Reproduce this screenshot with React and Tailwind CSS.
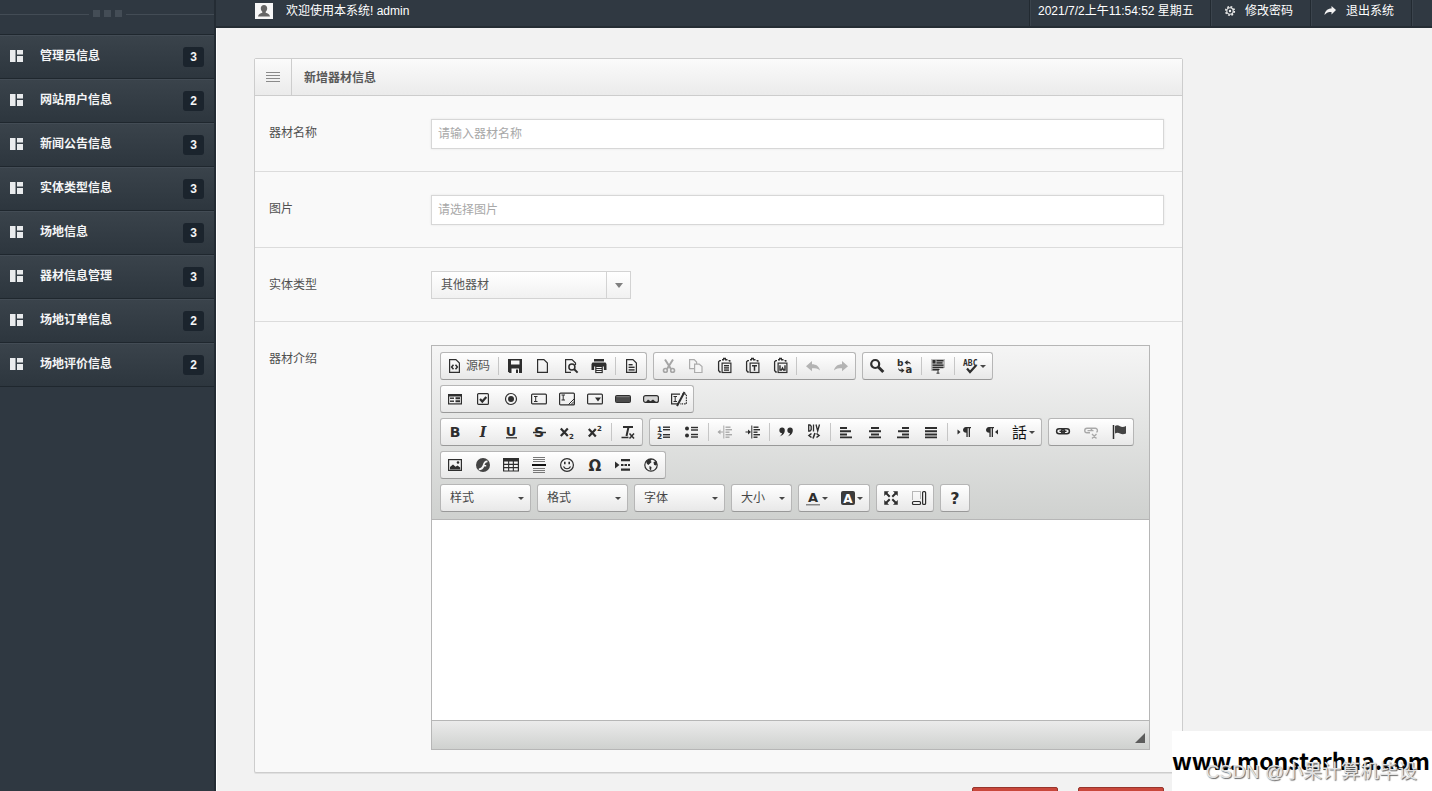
import React from "react";

const MENU = [
  ["管理员信息", 3],
  ["网站用户信息", 2],
  ["新闻公告信息", 3],
  ["实体类型信息", 3],
  ["场地信息", 3],
  ["器材信息管理", 3],
  ["场地订单信息", 2],
  ["场地评价信息", 2],
];

const INK = "#2e2e2e";
const S = { fill: "none", stroke: INK, strokeWidth: 1.2 };

const page = <path d="M2.6 1.6h6.3l3.5 3.5v9.3H2.6z" {...S} />;

const clipboard = (
  <g>
    <path d="M5 2.6H3.8l-1.2 1.200v8.700l1.200 1.500h1M12.500 2.600h1.300v1.200" {...S} strokeWidth="1.3" />
    <path d="M6 1.700h2M9 1.700h2.500M7 .6h3" stroke={INK} strokeWidth="1.6" />
    <rect x="6.1" y="5.1" width="8.8" height="9.4" {...S} />
  </g>
);

const lines = (rows, color = INK) =>
  rows.map(([x, y, w], i) => <rect key={i} x={x} y={y} width={w} height="1.4" fill={color} />);

const letter = (ch, extra = {}) => (
  <text x="8" y="13" textAnchor="middle" fontFamily="DejaVu Sans" fontWeight="bold" fontSize="13" fill={INK} {...extra}>
    {ch}
  </text>
);

const ICONS = {
  source: (
    <g>
      {page}
      <path d="M6.5 6.8 4.6 9l1.9 2.2M8.5 6.8 10.4 9l-1.9 2.2" {...S} strokeWidth="1.5" />
    </g>
  ),
  save: (
    <g>
      <path d="M1 1h14v14H2.5L1 13.5z" fill={INK} />
      <path d="M4 2.5h8.5v4H4z" fill="#f8f8f8" />
      <path d="M4.5 10.5h7.5V15H4.5z" fill="#f8f8f8" />
      <path d="M9 11.5h2V15H9z" fill={INK} />
    </g>
  ),
  page,
  preview: (
    <g>
      <path d="M12.5 7V5L9 1.6H2.6v12.8H8" {...S} />
      <circle cx="8.9" cy="8.9" r="3" {...S} strokeWidth="1.5" />
      <path d="m11 11 3.6 3.6" stroke={INK} strokeWidth="2" />
    </g>
  ),
  print: (
    <g fill={INK}>
      <path d="M3 1h10v2.5H3zM1.5 4.5h13L15.5 6v6h-2.6V8.4H3.1V12H.5V6z" />
      <path d="M4.2 7.5h7.6v7.6H4.2z" />
      <path d="M5.4 9h5.2v1.1H5.4zM5.4 11h5.2v1H5.4zM5.4 13h5.2v1H5.4z" fill="#f5f5f5" />
    </g>
  ),
  template: (
    <g>
      {page}
      {lines([[4.6, 6, 4], [4.6, 8.6, 6], [4.6, 11.2, 6]])}
    </g>
  ),
  cut: (
    <g stroke="#a5a5a5" fill="none" strokeWidth="2">
      <path d="M5 1.5 11 11M13 1.5 7 11" />
      <circle cx="5.4" cy="12.4" r="1.9" strokeWidth="1.6" />
      <circle cx="12.6" cy="12.4" r="1.9" strokeWidth="1.6" />
    </g>
  ),
  copy: (
    <g fill="#f5f5f5" stroke="#acacac" strokeWidth="1.2">
      <path d="M1.6 1.6h4.6l2.4 2.4v6.6H1.6z" />
      <path d="M6.6 6.1h4.6L14 8.6v5.9H6.6z" />
    </g>
  ),
  paste: (
    <g>
      {clipboard}
      {lines([[8, 7, 5], [8, 9.2, 5], [8, 11.400, 5]])}
    </g>
  ),
  pasteText: (
    <g>
      {clipboard}
      <path d="M8 7.700h5M10.500 7.700v5" stroke={INK} strokeWidth="1.5" />
    </g>
  ),
  pasteWord: (
    <g>
      {clipboard}
      <path d="M8 7.200v4.800h1.400l1.100-2 1.100 2H13V7.200" {...S} strokeWidth="1.4" />
    </g>
  ),
  undo: <path d="M1 8.2 7 3v3.2c4 0 7.2 2 8 6.3-2-2.2-4.500-2.300-8-2.300v3z" fill="#b3b3b3" />,
  redo: <path d="M15 8.200 9 3v3.200c-4 0-7.200 2-8 6.300 2-2.200 4.500-2.300 8-2.300v3z" fill="#b3b3b3" />,
  find: (
    <g fill="none" stroke={INK}>
      <circle cx="6.200" cy="6" r="4" strokeWidth="2.200" />
      <path d="m9.300 9 5 5" strokeWidth="3" />
    </g>
  ),
  replace: (
    <g fontFamily="DejaVu Sans" fontWeight="bold" fill={INK}>
      <text x="0" y="7.500" fontSize="9">b</text>
      <text x="8.500" y="15" fontSize="10">a</text>
      <path d="M7.500 4.500 10.500 2v1.500c2 0 3 1 3.500 3-1-1-2-1.200-3.500-1.200V7zM7.500 12.500 4.500 10v1.700c-2 0-3-.7-3.500-2 0 2.500 1.500 3.600 3.500 3.600V15z" />
    </g>
  ),
  selectAll: (
    <g>
      <path d="M1 1h14v9H1zM1 10h8v3H1z" fill="#bdbdbd" />
      {lines([[6.500, 2, 7], [6.500, 4.200, 6], [2.500, 6.500, 11], [2.500, 8.800, 11], [2.500, 11, 5]])}
      <path d="M2.500 2h3v3.500h-3z" fill={INK} />
      <path d="M6.500 11.500h3M8 11v4M6.500 15.200h3" stroke={INK} />
    </g>
  ),
  spell: (
    <g>
      <text x="0" y="8" fontSize="8" fontFamily="DejaVu Sans Mono" fontWeight="bold" fill={INK}>ABC</text>
      <path d="m4 10.500 3 3.500L13 7.500" {...S} strokeWidth="2.200" />
    </g>
  ),
  form: (
    <g>
      <path d="M1 3h14v10.500H1z" fill={INK} />
      <path d="M2.200 5.500h11.600v6.800H2.200z" fill="#f6f6f6" />
      {lines([[3, 6.500, 4], [3, 9.500, 4]])}
      <path d="M8.500 6.300h4.500v2H8.500zM8.500 9.300h4.500v2H8.500z" fill={INK} />
    </g>
  ),
  checkbox: (
    <g>
      <rect x="2.600" y="2.600" width="10.800" height="10.800" rx="1" {...S} />
      <path d="m5 8 2.300 2.500L11.300 6" {...S} strokeWidth="2.200" />
    </g>
  ),
  radio: (
    <g>
      <circle cx="8" cy="8" r="5.500" {...S} />
      <circle cx="8" cy="8" r="3" fill={INK} />
    </g>
  ),
  textfield: (
    <g>
      <rect x=".6" y="3.100" width="14.800" height="9.800" rx="1" {...S} />
      <path d="M3 5.500h3.500M3 10.500h3.500M4.700 5.500v5" stroke={INK} />
    </g>
  ),
  textarea: (
    <g>
      <rect x=".6" y="2.100" width="14.800" height="11.800" rx="1" {...S} />
      <path d="M2.500 4h3.500M2.500 9h3.500M4.200 4v5M15 8l-5.500 5.500M15 10.500l-3 3M15 12.500l-1 1" stroke={INK} />
    </g>
  ),
  selectbox: (
    <g>
      <rect x=".6" y="3.100" width="14.800" height="9.800" rx="1" {...S} />
      <path d="M8 6.500h6l-3 4z" fill={INK} />
    </g>
  ),
  button: (
    <g>
      <rect x=".5" y="4.500" width="15" height="7" rx="1" fill="#4b4b4b" stroke={INK} />
      <path d="M1.500 5.700h13" stroke="#818181" />
    </g>
  ),
  imageButton: (
    <g>
      <rect x=".6" y="4.600" width="14.800" height="6.800" rx="2" fill="#d5d5d5" stroke={INK} strokeWidth="1.200" />
      <path d="m3 11 2-2.500 2.500 1.800 2.500-1.800 3 2.500z" fill={INK} />
    </g>
  ),
  hidden: (
    <g>
      <path d="M9 3.100H.6v9.800H7" {...S} />
      <path d="M11 3.100h4.400v9.800H9" {...S} strokeDasharray="1.500 1" />
      <path d="M2.500 5.500h3.500M2.500 10.500h3.500M4.200 5.500v5" stroke={INK} />
      <path d="M13.500 1 6 15" stroke={INK} strokeWidth="2" />
    </g>
  ),
  bold: letter("B", { fontSize: 14 }),
  italic: letter("I", { fontFamily: "DejaVu Serif", fontStyle: "italic", fontSize: 14 }),
  underline: (
    <g>
      {letter("U", { y: 12, fontSize: 13 })}
      <path d="M3 13.800h11" stroke={INK} strokeWidth="1.300" />
    </g>
  ),
  strike: (
    <g>
      {letter("S", { fontSize: 14 })}
      <path d="M2 8.500h13" stroke={INK} strokeWidth="1.500" />
    </g>
  ),
  sub: (
    <g>
      <path d="m1.800 4.500 7 7.500M8.800 4.500 1.800 12" stroke={INK} strokeWidth="2.200" />
      {letter("2", { x: 12.500, y: 15, fontSize: 7 })}
    </g>
  ),
  sup: (
    <g>
      <path d="m1.800 5 7 7.500M8.800 5l-7 7.500" stroke={INK} strokeWidth="2.200" />
      {letter("2", { x: 12.500, y: 7, fontSize: 7 })}
    </g>
  ),
  clear: (
    <g>
      <path d="M3 3h10M8.500 3 6.500 12" stroke={INK} strokeWidth="2" />
      <path d="M1.500 13.500h7M9.500 9.500l4.500 5M14 9.500l-4.500 5" stroke={INK} strokeWidth="1.500" />
    </g>
  ),
  ol: (
    <g>
      {letter("1", { x: 3.500, y: 7.500, fontSize: 7.500 })}
      {letter("2", { x: 3.500, y: 14.500, fontSize: 7.500 })}
      {lines([[7, 2.500, 7], [7, 5, 7], [7, 10, 7], [7, 12.500, 7]])}
    </g>
  ),
  ul: (
    <g>
      <circle cx="3" cy="4.500" r="2" fill={INK} />
      <circle cx="3" cy="11.500" r="2" fill={INK} />
      {lines([[7, 2.800, 7], [7, 5.300, 7], [7, 9.800, 7], [7, 12.300, 7]])}
    </g>
  ),
  outdent: (
    <g>
      <path d="M6.800 1.500v13M1.500 8H6" stroke="#a9a9a9" fill="none" />
      <path d="M.5 8 3.500 5.500v5z" fill="#a9a9a9" />
      {lines([[8.500, 2.500, 5], [8.500, 5, 6.500], [8.500, 7.500, 4], [8.500, 10, 6.500], [8.500, 12.500, 4]], "#a9a9a9")}
    </g>
  ),
  indent: (
    <g>
      <path d="M6.800 1.500v13M.5 8H4" stroke={INK} />
      <path d="M6 8 3 5.500v5z" fill={INK} />
      {lines([[8.500, 2.500, 5], [8.500, 5, 6.500], [8.500, 7.500, 4], [8.500, 10, 6.500], [8.500, 12.500, 4]])}
    </g>
  ),
  quote: (
    <g fill={INK}>
      <path d="M4.200 3.500A2.700 2.700 0 1 0 4 9c-.3 1.500-1 2.500-2.500 3.400 3-.8 5.300-3 5.300-6.200 0-1.600-1-2.700-2.600-2.700z" />
      <path d="M12.200 3.500A2.700 2.700 0 1 0 12 9c-.3 1.500-1 2.500-2.500 3.400 3-.8 5.300-3 5.300-6.200 0-1.600-1-2.700-2.600-2.700z" />
    </g>
  ),
  div: (
    <g fill="none" stroke={INK} strokeWidth="1.300">
      <path d="M2.700 1v6h1.300l1.200-1.200V2.200L4 1zM7.500.5v7M10 .5l1.700 6.500L13.500.5" />
      <path d="M5.500 9.500 3 11.500l2.500 2M10.500 9.500l2.500 2-2.500 2M9 9l-2 5.500" strokeWidth="1.600" />
    </g>
  ),
  left: <g fill={INK}><path d="M1 3h7v2H1zM1 6.200h11v2H1zM1 9.400h7v2H1zM1 12.400h12v1.800H1z" /></g>,
  center: <g fill={INK}><path d="M4 3h8v2H4zM2 6.200h12v2H2zM4 9.400h8v2H4zM2 12.400h12v1.800H2z" /></g>,
  right: <g fill={INK}><path d="M7 3h7v2H7zM3 6.200h11v2H3zM7 9.400h7v2H7zM2 12.400h12v1.800H2z" /></g>,
  justify: <g fill={INK}><path d="M2 3h12v2H2zM2 6.200h12v2H2zM2 9.400h12v2H2zM2 12.400h12v1.800H2z" /></g>,
  ltr: (
    <g fill={INK}>
      <path d="M1.500 5.500 4.500 8l-3 2.500z" />
      <path d="M10 3h5v1.300h-1V13h-1.300V4.300h-1V13h-1.300V8.800C8.200 8.800 7 7.500 7 6s1.200-3 3-3z" />
    </g>
  ),
  rtl: (
    <g fill={INK}>
      <path d="M14 5.500 11 8l3 2.500z" />
      <path d="M5 3h5v1.300H9V13H7.700V4.300h-1V13H5.400V8.800C3.200 8.800 2 7.500 2 6s1.200-3 3-3z" />
    </g>
  ),
  lang: (
    <text x="0" y="13.500" fontSize="15" fontFamily="Noto Sans CJK TC" fill="#111">話</text>
  ),
  link: (
    <g fill="none" stroke={INK} strokeWidth="1.500">
      <rect x="1.600" y="4.800" width="7.800" height="5" rx="2.500" />
      <rect x="6.600" y="4.800" width="7.800" height="5" rx="2.500" />
      <path d="M4.500 7.300h7" />
    </g>
  ),
  unlink: (
    <g fill="none" stroke="#a9a9a9" strokeWidth="1.400">
      <path d="M7 8.800H4a2.200 2.200 0 0 1 0-4.500h3.500L9 6M8 4.300h4a2.200 2.200 0 0 1 1.500 4M4.500 6.600h6M9 10l4.500 4.500M13.500 10 9 14.500" />
    </g>
  ),
  flag: (
    <g>
      <path d="M2.500 1v14" stroke={INK} strokeWidth="1.500" />
      <path d="M4 2c2-1.300 3.500-.5 5 .3 1.600.8 3.500.9 6-.3v7.500c-2.500 1-4.300.8-6 0-1.500-.7-3-1-5 0z" fill="#444" />
    </g>
  ),
  image: (
    <g>
      <rect x="1.600" y="2.600" width="12.800" height="10.800" {...S} />
      <path d="m3 12.500 0-2.500 3-2.500 2.500 2.200 2-1.200 2.700 2v2z" fill={INK} />
      <circle cx="11" cy="5.500" r="1.300" fill={INK} />
    </g>
  ),
  flash: (
    <g>
      <circle cx="8" cy="8" r="7" fill="#444" />
      <path d="M12.500 3.500c-3 0-4 2-4.500 3.800C7.200 10 6 11.200 3.800 11.500v1.700c3 0 4.700-1.500 5.400-3.700h2V8H9.500c.5-1.500 1.300-2.500 3-2.700z" fill="#f4f4f4" />
    </g>
  ),
  table: (
    <g>
      <path d="M0 1h16v13.500H0z" fill={INK} />
      <path d="M1.200 4.500h3.900v2.300H1.200zM6.200 4.500h3.600v2.300H6.200zM10.900 4.500h3.900v2.300h-3.900zM1.200 7.900h3.900v2.200H1.200zM6.200 7.900h3.600v2.200H6.200zM10.900 7.900h3.900v2.200h-3.900zM1.200 11.200h3.900v2.200H1.200zM6.200 11.200h3.600v2.200H6.200zM10.900 11.200h3.900v2.200h-3.900z" fill="#f6f6f6" />
    </g>
  ),
  rule: (
    <g>
      <path d="M2 .5h12M2 2.500h12M2 4.500h12M2 11.500h12M2 13.500h12M2 15.500h12" stroke="#777" />
      <path d="M1 8h14" stroke="#111" strokeWidth="2" />
    </g>
  ),
  smiley: (
    <g>
      <circle cx="8" cy="8" r="6.400" {...S} />
      <path d="M5.800 4.800v2.400M10.200 4.800v2.400" stroke={INK} strokeWidth="1.600" />
      <path d="M4.500 9.500c1.500 3 5.500 3 7 0" {...S} />
    </g>
  ),
  omega: letter("Ω", { y: 14, fontSize: 15, x: 8, fontFamily: "DejaVu Sans", fontWeight: "bold" }),
  pagebreak: (
    <g fill={INK}>
      <path d="M0 4.500 4.500 8 0 11.500z" />
      <path d="M6 2h9v2.200H6zM6 7h2.500v2H6zM9.500 7H12v2H9.500zM13 7h2v2h-2zM6 11.500h9v2.200H6z" />
    </g>
  ),
  globe: (
    <g>
      <circle cx="8" cy="8" r="6.200" {...S} />
      <path d="M3 4.500C5 2 7.500 1.500 9 2.300L7.500 4l1.200 1-2 1.800L5.500 8 4 7zM6.500 9l2 1-.5 3.500-1.500-1.500zM10.500 5l3-1 .5 3.500-1.500 1-1.500-.8z" fill={INK} />
    </g>
  ),
  color: (
    <g>
      {letter("A", { y: 12, fontSize: 13 })}
      <path d="M1 14h14v1.500H1z" fill="#888" />
    </g>
  ),
  bgcolor: (
    <g>
      <rect x="1" y="1" width="14" height="14" rx="2" fill="#3c3c3c" />
      {letter("A", { fill: "#fff", fontSize: 12, y: 12.500 })}
    </g>
  ),
  maximize: (
    <g fill={INK} stroke={INK}>
      <path d="M1.500 1.500h4l-4 4zM14.500 1.500v4l-4-4zM1.500 14.500v-4l4 4zM14.500 14.500h-4l4-4z" strokeWidth=".5" />
      <path d="m3 3 3.700 3.700M13 3 9.300 6.700M3 13l3.700-3.700M13 13 9.300 9.300" strokeWidth="2" />
    </g>
  ),
  blocks: (
    <g>
      <path d="M1.500 9.500v-8h8v8" fill="none" stroke="#777" strokeDasharray="1 1" />
      <rect x="1.500" y="11.500" width="8" height="3" rx="1" {...S} />
      <rect x="11.600" y="1.600" width="3" height="12.800" rx="1" {...S} />
    </g>
  ),
  help: letter("?", { y: 14, fontSize: 16, x: 8 }),
};

const LABELS = {
  save: "保存", page: "新建", preview: "预览", print: "打印", template: "模板", cut: "剪切", copy: "复制",
  paste: "粘贴", pasteText: "粘贴为无格式文本", pasteWord: "从 MS Word 粘贴", undo: "撤消", redo: "重做",
  find: "查找", replace: "替换", selectAll: "全选", spell: "拼写检查", form: "表单", checkbox: "复选框",
  radio: "单选按钮", textfield: "单行文本", textarea: "多行文本", selectbox: "列表/菜单", button: "按钮",
  imageButton: "图像按钮", hidden: "隐藏域", bold: "加粗", italic: "倾斜", underline: "下划线", strike: "删除线",
  sub: "下标", sup: "上标", clear: "清除格式", ol: "编号列表", ul: "项目列表", outdent: "减少缩进",
  indent: "增加缩进", quote: "块引用", div: "创建 DIV 容器", left: "左对齐", center: "居中", right: "右对齐",
  justify: "两端对齐", ltr: "文字方向从左到右", rtl: "文字方向从右到左", lang: "设置语言", link: "插入链接",
  unlink: "取消链接", flag: "锚点", image: "图像", flash: "Flash", table: "表格", rule: "水平线",
  smiley: "表情", omega: "特殊符号", pagebreak: "分页符", globe: "IFrame", color: "文本颜色",
  bgcolor: "背景颜色", maximize: "全屏", blocks: "显示区块", help: "关于",
};

const WITH_CARET = ["spell", "lang", "color", "bgcolor"];

// Each row is a list of groups; "|" is a separator inside a group.
const ROWS = [
  [
    ["source", "|", "save", "page", "preview", "print", "|", "template"],
    ["cut", "copy", "paste", "pasteText", "pasteWord", "|", "undo", "redo"],
    ["find", "replace", "|", "selectAll", "|", "spell"],
  ],
  [["form", "checkbox", "radio", "textfield", "textarea", "selectbox", "button", "imageButton", "hidden"]],
  [
    ["bold", "italic", "underline", "strike", "sub", "sup", "|", "clear"],
    ["ol", "ul", "|", "outdent", "indent", "|", "quote", "div", "|", "left", "center", "right", "justify", "|", "ltr", "rtl", "lang"],
    ["link", "unlink", "flag"],
  ],
  [["image", "flash", "table", "rule", "smiley", "omega", "pagebreak", "globe"]],
];

const GROUP = "flex h-7 items-center rounded-[3px] border border-[#b6b6b6] border-b-[#999] bg-linear-to-b from-white to-[#e8e8e8]";

function Caret() {
  return (
    <svg viewBox="0 0 6 3" className="h-[3px] w-[6px]" aria-hidden="true">
      <path d="M0 0h6L3 3z" fill="#474747" />
    </svg>
  );
}

function ToolButton({ name }) {
  const icon = (
    <svg viewBox="0 0 16 16" className="size-4 shrink-0 overflow-visible" aria-hidden="true">
      {ICONS[name]}
    </svg>
  );
  if (name === "source") {
    return (
      <button type="button" className="flex h-full items-center gap-[3px] px-1.5 text-[12px] text-[#565656]">
        {icon}
        源码
      </button>
    );
  }
  const caret = WITH_CARET.includes(name);
  return (
    <button
      type="button"
      aria-label={LABELS[name]}
      className={caret ? "flex h-full w-[35px] items-center gap-px pl-1.5" : "flex h-full w-7 items-center justify-center"}
    >
      {icon}
      {caret && <Caret />}
    </button>
  );
}

function Group({ items }) {
  return (
    <div className={GROUP}>
      {items.map((it, i) =>
        it === "|" ? <span key={i} className="mx-[2px] h-[18px] w-px bg-[#c6c6c6]" /> : <ToolButton key={i} name={it} />
      )}
    </div>
  );
}

function Combo({ label, narrow }) {
  return (
    <div className={`${GROUP} relative ${narrow ? "w-[61px]" : "w-[91px]"}`}>
      <select aria-label={label} className="h-full w-full appearance-none bg-transparent pl-[9px] text-[12px] text-[#474747] outline-none">
        <option>{label}</option>
      </select>
      <span className="pointer-events-none absolute inset-y-0 right-[6px] flex items-center">
        <Caret />
      </span>
    </div>
  );
}

function Editor() {
  return (
    <div className="mr-8 grow border border-[#b6b6b6] bg-white">
      <div className="flex flex-col gap-[5px] border-b border-[#b6b6b6] bg-linear-to-b from-[#f5f5f5] to-[#cfd1cf] px-2 pt-1.5 pb-[7px]">
        {ROWS.map((row, i) => (
          <div key={i} className="flex gap-1.5">
            {row.map((g, j) => (
              <Group key={j} items={g} />
            ))}
          </div>
        ))}
        <div className="flex gap-1.5">
          <Combo label="样式" />
          <Combo label="格式" />
          <Combo label="字体" />
          <Combo label="大小" narrow />
          <Group items={["color", "bgcolor"]} />
          <Group items={["maximize", "blocks"]} />
          <Group items={["help"]} />
        </div>
      </div>
      <textarea id="intro" className="block h-[200px] w-full resize-none bg-white p-5 text-[13px] outline-none" />
      <div className="flex h-[29px] items-end justify-end border-t border-[#b6b6b6] bg-linear-to-b from-[#ebebeb] to-[#cfd1cf] px-1 pb-1.5">
        <svg viewBox="0 0 10 10" className="size-[10px]" aria-hidden="true">
          <path d="M10 0v10H0z" fill="#5c5c5c" />
        </svg>
      </div>
    </div>
  );
}

function Field({ id, label, children, last }) {
  return (
    <div className={`flex items-start pt-[23px] pb-[22px] pl-[14px] ${last ? "" : "border-b border-[#dcdcdc]"}`}>
      <label htmlFor={id} className="w-[162px] shrink-0 pt-1 text-[12px] leading-5 text-[#505050]">
        {label}
      </label>
      {children}
    </div>
  );
}

const INPUT =
  "mr-[18px] h-[30px] min-w-0 grow border border-[#d7d7d7] bg-white px-1.5 text-[12px] text-[#555] shadow-[0_0_2px_#e4e4e4] outline-none placeholder:text-[#a8a8a8]";

function Sidebar() {
  return (
    <aside className="w-[216px] shrink-0 border-r-2 border-[#242c34] bg-[#2f3841]">
      <div className="flex h-[34px] items-start gap-1 pt-[10px]">
        <span className="mt-1 h-px grow bg-[#434c55]" />
        <span className="flex gap-1">
          <i className="size-[7px] bg-[#444d56]" />
          <i className="size-[7px] bg-[#444d56]" />
          <i className="size-[7px] bg-[#444d56]" />
        </span>
        <span className="mt-1 h-px grow bg-[#434c55]" />
      </div>
      <nav className="border-t border-[#1f272e]">
        {MENU.map(([name, count]) => (
          <a
            key={name}
            href="#"
            className="flex h-11 items-center border-t border-b border-t-[#434c55] border-b-[#1f272e] bg-linear-to-b from-[#3a434b] to-[#2d363e] pr-[10px] pb-[3px] pl-[10px] text-[12px] font-bold text-[#f4f5f6]"
          >
            <svg viewBox="0 0 13 12" className="h-3 w-[13px]" aria-hidden="true">
              <path d="M0 0h5.500v12H0zM7 0h6v4.500H7zM7 6h6v6H7z" fill="#e9ebed" />
            </svg>
            <span className="grow pl-[17px]">{name}</span>
            <span className="mt-[2px] flex h-5 w-[21px] items-center justify-center rounded-[3px] bg-[#1b242d]">
              {count}
            </span>
          </a>
        ))}
      </nav>
    </aside>
  );
}

const CELL = "flex h-full items-center border-l border-l-[#222a31] pb-[5px] shadow-[inset_1px_0_#3b444d]";

function TopBar() {
  return (
    <header className="flex h-[28px] shrink-0 items-center border-b-2 border-[#252d34] bg-[#303942] text-[12px] text-white">
      <div className="flex grow items-center gap-[13px] pb-[5px] pl-[39px]">
        <svg viewBox="0 0 18 16" className="h-4 w-[18px]" aria-hidden="true">
          <path d="M0 0h18v16H0z" fill="#f7f7f7" />
          <path d="M9 2c2 0 3.200 1.400 3.200 3.300 0 1.500-.6 2.700-1.500 3.400v1.100c2 .7 4 1.200 4.300 3.700H3c.3-2.500 2.300-3 4.300-3.700V8.700C6.400 8 5.800 6.800 5.800 5.300 5.800 3.400 7 2 9 2z" fill="#666" />
        </svg>
        <span>欢迎使用本系统! admin</span>
      </div>
      <span className={`${CELL} w-[181px] pl-2`}>2021/7/2上午11:54:52 星期五</span>
      <a href="#" className={`${CELL} w-[100px] gap-[9px] pl-[13px]`}>
        <svg viewBox="0 0 12 12" className="size-[12px]" aria-hidden="true">
          <circle cx="6" cy="6" r="4.300" fill="none" stroke="#eee" strokeWidth="1.600" strokeDasharray="1.800 1.577" />
          <circle cx="6" cy="6" r="3.200" fill="none" stroke="#eee" strokeWidth="1.100" />
          <circle cx="6" cy="6" r="1.200" fill="#eee" />
        </svg>
        修改密码
      </a>
      <a href="#" className={`${CELL} w-[101px] gap-[10px] pl-[13px]`}>
        <svg viewBox="0 0 12 12" className="size-[12px]" aria-hidden="true">
          <path d="M12 5 7.500 1v2.500C3.500 3.500 1 6 .5 10c2-2.500 4-3 7-3v2.500z" fill="#f2f2f2" />
        </svg>
        退出系统
      </a>
      <span className={`${CELL} w-[21px]`} />
    </header>
  );
}

export default function App() {
  return (
    <div className="relative flex h-screen overflow-hidden bg-[#f2f2f2] font-['Liberation_Sans','Noto_Sans_CJK_SC',sans-serif]">
      <Sidebar />
      <div className="flex min-w-0 grow flex-col">
        <TopBar />
        <div className="grow border-l border-white">
          <main className="w-full max-w-[966px] pt-[30px] pl-[37px]">
            <form>
              <section className="rounded-[2px] border border-[#cdcdcd] bg-[#f9f9f9] shadow-[0_1px_0_#e0e0e0]">
                <h1 className="flex h-[37px] items-stretch border-b border-[#cdcdcd] bg-linear-to-b from-[#fbfbfb] to-[#ebebeb] text-[12px] font-bold text-[#595959]">
                  <span className="flex w-[37px] items-center justify-center border-r border-[#cdcdcd]">
                    <svg viewBox="0 0 14 10" className="h-[10px] w-[14px]" aria-hidden="true">
                      <path d="M0 .5h14M0 3.500h14M0 6.500h14M0 9.500h14" stroke="#8a8a8a" />
                    </svg>
                  </span>
                  <span className="flex items-center pt-[2px] pl-3">新增器材信息</span>
                </h1>
                <Field id="name" label="器材名称">
                  <input id="name" type="text" placeholder="请输入器材名称" className={INPUT} />
                </Field>
                <Field id="picture" label="图片">
                  <input id="picture" type="text" placeholder="请选择图片" className={INPUT} />
                </Field>
                <Field id="kind" label="实体类型">
                  <div className="relative h-7 w-[200px]">
                    <select
                      id="kind"
                      className="h-full w-full appearance-none border border-[#d3d3d3] bg-linear-to-b from-white to-[#f1f1f1] pl-[9px] text-[12px] text-[#555] outline-none"
                    >
                      <option>其他器材</option>
                    </select>
                    <span className="pointer-events-none absolute inset-y-px right-0 flex w-[25px] items-center justify-center border-l border-[#d3d3d3]">
                      <svg viewBox="0 0 8 5" className="h-[5px] w-2" aria-hidden="true">
                        <path d="M0 0h8L4 5z" fill="#808080" />
                      </svg>
                    </span>
                  </div>
                </Field>
                <Field id="intro" label="器材介绍" last>
                  <Editor />
                </Field>
              </section>
              <div className="mt-[14px] mr-[19px] flex justify-end gap-5">
                <button type="submit" aria-label="提交" className="h-8 w-[86px] rounded-[2px] border border-[#97352c] bg-[#c9473b]" />
                <button type="reset" aria-label="重置" className="h-8 w-[86px] rounded-[2px] border border-[#97352c] bg-[#c9473b]" />
              </div>
            </form>
          </main>
        </div>
      </div>
      <div className="absolute right-0 bottom-0 h-[60px] w-[260px] bg-white">
        <p className="absolute top-[11px] right-[2px] font-['Noto_Sans_CJK_SC',sans-serif] text-[23px] leading-9 font-bold whitespace-nowrap text-black">
          www.monsterhua.com
        </p>
        <p className="absolute right-[15px] bottom-[7px] text-[19px] leading-6 whitespace-nowrap text-[#e2e2e2] [text-shadow:1px_1px_1px_#666]">
          CSDN @小果计算机毕设
        </p>
      </div>
    </div>
  );
}
